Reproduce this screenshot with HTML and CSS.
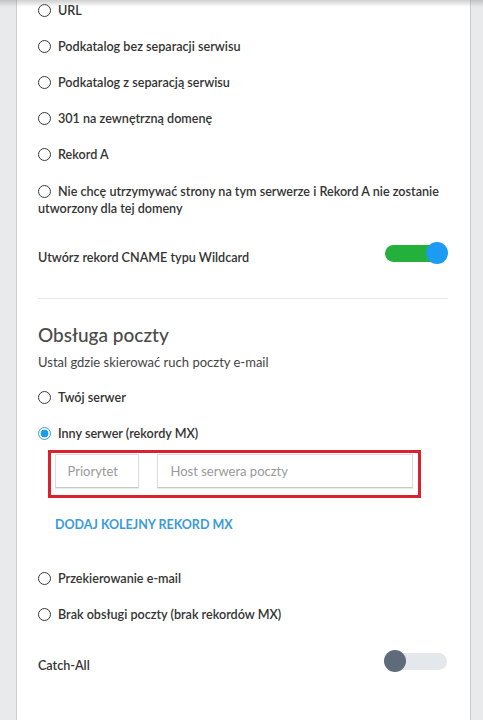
FILE: index.html
```html
<!DOCTYPE html>
<html lang="pl">
<head>
<meta charset="utf-8">
<link rel="stylesheet" href="styles.css">
</head>
<body>
<div class="top-shadow"></div>
<div class="card">
  <div class="opt"><span class="radio"></span>URL</div>
  <div class="opt"><span class="radio"></span>Podkatalog bez separacji serwisu</div>
  <div class="opt"><span class="radio"></span>Podkatalog z separacją serwisu</div>
  <div class="opt"><span class="radio"></span>301 na zewnętrzną domenę</div>
  <div class="opt"><span class="radio"></span>Rekord A</div>
  <div class="opt multi"><span class="radio"></span>Nie chcę utrzymywać strony na tym serwerze i Rekord A nie zostanie utworzony dla tej domeny</div>

  <div class="switch-row wildcard">
    <span class="switch-label">Utwórz rekord CNAME typu Wildcard</span>
    <span class="toggle on"><span class="knob"></span></span>
  </div>

  <hr class="divider">

  <h2 class="heading">Obsługa poczty</h2>
  <p class="sub">Ustal gdzie skierować ruch poczty e-mail</p>

  <div class="opt first"><span class="radio"></span>Twój serwer</div>
  <div class="opt"><span class="radio checked"></span>Inny serwer (rekordy MX)</div>

  <div class="mx-box">
    <div class="field prio">Priorytet</div>
    <div class="field host">Host serwera poczty</div>
  </div>

  <div class="add-link">DODAJ KOLEJNY REKORD MX</div>

  <div class="opt after-link"><span class="radio"></span>Przekierowanie e-mail</div>
  <div class="opt"><span class="radio"></span>Brak obsługi poczty (brak rekordów MX)</div>

  <div class="switch-row catch">
    <span class="switch-label">Catch-All</span>
    <span class="toggle off"><span class="knob"></span></span>
  </div>
</div>
</body>
</html>
```

FILE: styles.css
```css
html, body {
  margin: 0;
  padding: 0;
}
body {
  background: #e9eaec;
  font-family: Lato, "Open Sans", sans-serif;
  color: #333;
  height: 720px;
  overflow: hidden;
}
.top-shadow {
  position: fixed;
  left: 0;
  right: 0;
  top: 0;
  height: 7px;
  background: linear-gradient(to bottom, rgba(150,150,150,0.45), rgba(200,200,200,0));
  z-index: 5;
}
.card {
  margin-left: 16px;
  width: 455px;
  min-height: 740px;
  background: #fff;
  border-left: 1px solid #c9cbce;
  border-right: 1px solid #c9cbce;
  padding: 3px 22px 0 21px;
  box-sizing: border-box;
}
.opt {
  font-size: 12.6px;
  font-weight: 600;
  line-height: 16px;
  margin-bottom: 20px;
  color: #333;
}
.opt.multi {
  line-height: 17px;
  margin-bottom: 25px;
}
.radio {
  display: inline-block;
  width: 13px;
  height: 13px;
  box-sizing: border-box;
  border: 1.4px solid #3a3a3a;
  border-radius: 50%;
  vertical-align: -2px;
  margin-right: 7px;
  position: relative;
}
.radio.checked {
  border-color: #2f9fe8;
  background: radial-gradient(circle, #1a9cf0 0 3.6px, #fff 4.2px);
}
.switch-row {
  display: flex;
  justify-content: space-between;
  align-items: flex-start;
}
.switch-label {
  font-size: 12.6px;
  font-weight: 600;
  line-height: 16px;
  margin-top: 8px;
}
.toggle {
  width: 64px;
  height: 22px;
  position: relative;
  display: block;
}
.toggle::before {
  content: "";
  position: absolute;
  left: 1px;
  right: 1px;
  top: 3px;
  height: 17px;
  border-radius: 9px;
}
.toggle.on::before { background: #23b03b; }
.toggle.off::before { background: #e4e7eb; }
.knob {
  position: absolute;
  top: 0;
  width: 22px;
  height: 22px;
  border-radius: 50%;
}
.toggle.on .knob { right: 0; background: #1b9cf2; }
.toggle.off .knob { left: 0; background: #5f6b7a; }

.divider {
  border: 0;
  border-top: 1px solid #e6e7e9;
  margin: 32px 0 0 0;
}
.heading {
  font-size: 19px;
  font-weight: 500;
  line-height: 24px;
  color: #4a4a4a;
  margin: 24px 0 0 0;
}
.sub {
  font-size: 13px;
  line-height: 16px;
  color: #444;
  margin: 7px 0 0 0;
}
.opt.first { margin-top: 20px; }

.mx-box {
  margin: -12px 0 0 10px;
  width: 373px;
  height: 48px;
  box-sizing: border-box;
  border: 3.5px solid #d9222d;
  display: flex;
  gap: 18px;
  padding: 0.5px 5px 0 3.5px;
}
.field {
  height: 34px;
  box-sizing: border-box;
  border: 1px solid #dcdcdc;
  border-bottom-color: #c8c8c8;
  box-shadow: 0 1px 1px rgba(0,0,0,0.08);
  font-size: 13px;
  color: #999;
  line-height: 32px;
  padding-left: 12px;
}
.field.prio { width: 84px; }
.field.host { width: 256px; padding-left: 13px; }

.add-link {
  margin: 19px 0 0 17px;
  font-size: 12.5px;
  font-weight: 700;
  line-height: 16px;
  color: #3b9ada;
}
.opt.after-link { margin-top: 38px; }
.switch-row.catch { margin-top: 27px; }
```
